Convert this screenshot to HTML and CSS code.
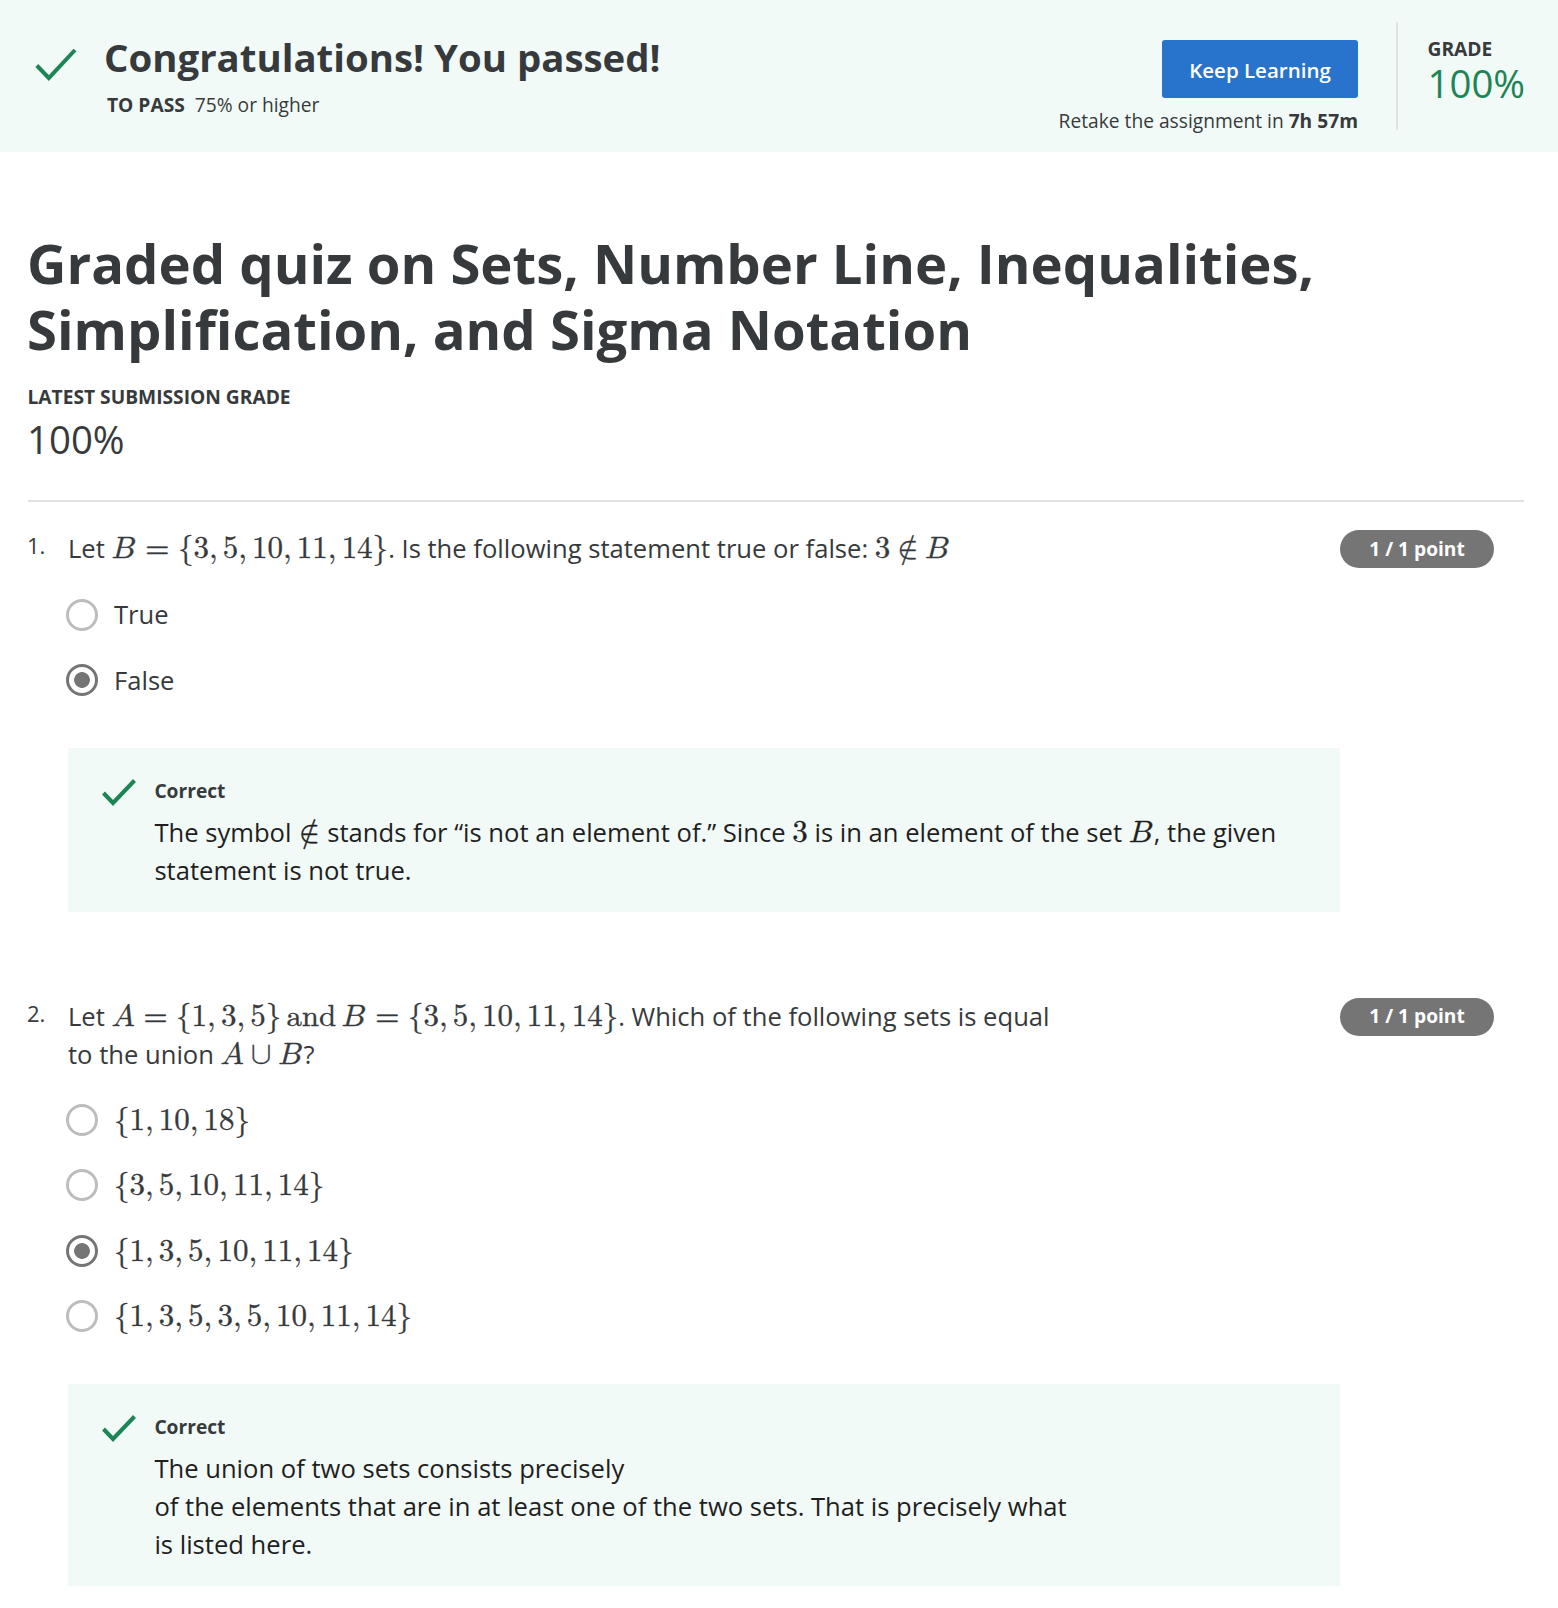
FILE: index.html
```html
<!DOCTYPE html>
<html lang="en">
<head>
<meta charset="utf-8">
<title>Graded quiz</title>
<link rel="stylesheet" href="styles.css">
</head>
<body>
<header class="banner">
  <svg class="banner-check" viewBox="0 0 42 34"><path d="M1.8 17.5 13.8 30 40 2" /></svg>
  <div class="banner-text">
    <h2>Congratulations! You passed!</h2>
    <p><b>TO PASS</b><span class="threshold">75% or higher</span></p>
  </div>
  <div class="banner-action">
    <button class="keep">Keep Learning</button>
    <p>Retake the assignment in <b>7h 57m</b></p>
  </div>
  <div class="banner-grade">
    <b>GRADE</b>
    <span class="grade-value">100%</span>
  </div>
</header>
<main>
  <h1>Graded quiz on Sets, Number Line, Inequalities,<br>Simplification, and Sigma Notation</h1>
  <p class="latest">LATEST SUBMISSION GRADE</p>
  <p class="latest-value">100%</p>
  <hr>
  <section class="question q1">
    <span class="num">1.</span>
    <div class="body">
      <div class="prompt">Let <span class="m"><i class="b">B</i><span class="eq">=</span>{3<u>,</u>5<u>,</u>10<u>,</u>11<u>,</u>14}</span>. Is the following statement true or false: <span class="m">3<span class="rel">∉</span><i class="b">B</i></span></div>
      <ul class="options">
        <li><span class="radio"></span><span class="label">True</span></li>
        <li><span class="radio on"></span><span class="label">False</span></li>
      </ul>
      <div class="feedback">
        <svg class="check" viewBox="0 0 34 27"><path d="M1.5 14 11 24 32.5 1.5" /></svg>
        <div>
          <h3>Correct</h3>
          <p>The symbol <span class="m"><span class="notin">∉</span></span> stands for “is not an element of.” Since <span class="m">3</span> is in an element of the set <span class="m"><i class="b">B</i></span>, the given<br>statement is not true.</p>
        </div>
      </div>
    </div>
    <span class="badge">1 / 1 point</span>
  </section>
  <section class="question q2">
    <span class="num">2.</span>
    <div class="body">
      <div class="prompt">Let <span class="m"><i>A</i><span class="eq">=</span>{1<u>,</u>3<u>,</u>5}<span class="and">and</span><i class="b">B</i><span class="eq">=</span>{3<u>,</u>5<u>,</u>10<u>,</u>11<u>,</u>14}</span>. Which of the following sets is equal<br>to the union <span class="m"><i>A</i><span class="cup">∪</span><i class="b">B</i></span>?</div>
      <ul class="options">
        <li><span class="radio"></span><span class="m">{1<u>,</u>10<u>,</u>18}</span></li>
        <li><span class="radio"></span><span class="m">{3<u>,</u>5<u>,</u>10<u>,</u>11<u>,</u>14}</span></li>
        <li><span class="radio on"></span><span class="m">{1<u>,</u>3<u>,</u>5<u>,</u>10<u>,</u>11<u>,</u>14}</span></li>
        <li><span class="radio"></span><span class="m">{1<u>,</u>3<u>,</u>5<u>,</u>3<u>,</u>5<u>,</u>10<u>,</u>11<u>,</u>14}</span></li>
      </ul>
      <div class="feedback">
        <svg class="check" viewBox="0 0 34 27"><path d="M1.5 14 11 24 32.5 1.5" /></svg>
        <div>
          <h3>Correct</h3>
          <p>The union of two sets consists precisely<br>of the elements that are in at least one of the two sets. That is precisely what<br>is listed here.</p>
        </div>
      </div>
    </div>
    <span class="badge">1 / 1 point</span>
  </section>
</main>
</body>
</html>
```
FILE: styles.css
```css
* { box-sizing: border-box; margin: 0; padding: 0; }
body { width: 1558px; height: 1608px; overflow: hidden; background: #fff; color: #373a3c; font: 25.6px/38px "Open Sans", sans-serif; }

.banner { display: flex; height: 152px; padding-left: 35px; background: #f1faf7; }
.banner-check { width: 42px; height: 34px; margin: 48px 27px 0 0; }
.banner-check path, .check path { fill: none; stroke: #1d8555; stroke-width: 4; }
.banner-text { flex: 1; padding-top: 32px; }
h2 { font-size: 38.4px; line-height: 50px; }
.banner-text p { padding: 8px 0 0 3px; font-size: 19.2px; line-height: 30px; }
.threshold { margin-left: 10px; }
.banner-action { display: flex; flex-direction: column; align-items: flex-end; padding-top: 40px; margin-right: 38px; font-size: 19.2px; }
.keep { width: 196px; height: 58px; margin-bottom: 8px; padding-top: 1px; border: 0; border-radius: 3px; background: #2873cb; color: #fff; font: 600 20.5px/58px "Open Sans", sans-serif; }
.banner-action p { line-height: 30px; }
.banner-grade { display: flex; flex-direction: column; width: 162px; height: 108px; margin-top: 22px; padding: 12px 0 0 29.5px; border-left: 2px solid #e1e1e1; font-size: 19.2px; line-height: 30px; }
.grade-value { color: #1d8555; font-size: 38.4px; line-height: 38px; }

main { padding: 78px 34px 0 28px; }
h1 { margin-left: -1px; font-size: 54.45px; line-height: 66px; }
.latest { margin-left: -.5px; padding-top: 20px; font-size: 19.2px; font-weight: 700; line-height: 30px; }
.latest-value { margin-left: -1px; padding-top: 1px; font-size: 38.4px; line-height: 52px; }
hr { height: 2px; border: 0; margin-top: 35px; background: #e1e1e1; }

.question { display: flex; align-items: flex-start; }
.q1 { padding-top: 27px; }
.q2 { padding-top: 85px; }
.num { width: 40px; font-size: 22px; line-height: 33px; text-indent: -1px; }
.body { width: 1272px; }
.prompt { padding-top: 1px; }
.badge { width: 154px; height: 38px; margin-top: 1px; border-radius: 19px; background: #757575; color: #fff; font-size: 19.2px; font-weight: 700; text-align: center; }
.q2 .badge { line-height: 36px; }

/* Inline formulas */
.m { font-family: "Latin Modern Math", "Liberation Serif", serif; font-size: 31px; line-height: 0; white-space: nowrap; -webkit-text-stroke: .35px currentColor; }
.m i { font-style: normal; text-transform: math-auto; }
.m .b { margin-right: .05em; }
.m u { margin-right: .167em; text-decoration: none; }
.eq { margin: 0 .278em; }
.rel { margin: 0 .22em 0 .23em; }
.notin { margin: 0 .03em; }
.cup { margin: 0 .222em; }
.and { margin: 0 .167em; }

.options { list-style: none; padding-top: 14px; }
.q2 .options { padding-top: 13px; }
.options li { display: flex; align-items: center; height: 65.5px; }
.label { padding-top: 1px; }
.options .m { padding-top: 2px; }
.radio { width: 32px; height: 32px; margin: 0 16px 0 -2px; border: 3px solid #bdbdbd; border-radius: 50%; }
.radio.on { border-color: #757575; background: radial-gradient(circle, #757575 7.5px, #fff 8.2px); }

.feedback { display: flex; margin-top: 35px; padding: 28px 0 22px 34px; background: #f1faf7; color: #1f1f1f; }
.check { width: 34px; height: 27px; margin: 3px 18.4px 0 0; }
h3 { color: #373a3c; font-size: 19.2px; line-height: 30px; }
.feedback p { padding-top: 8px; }
```
